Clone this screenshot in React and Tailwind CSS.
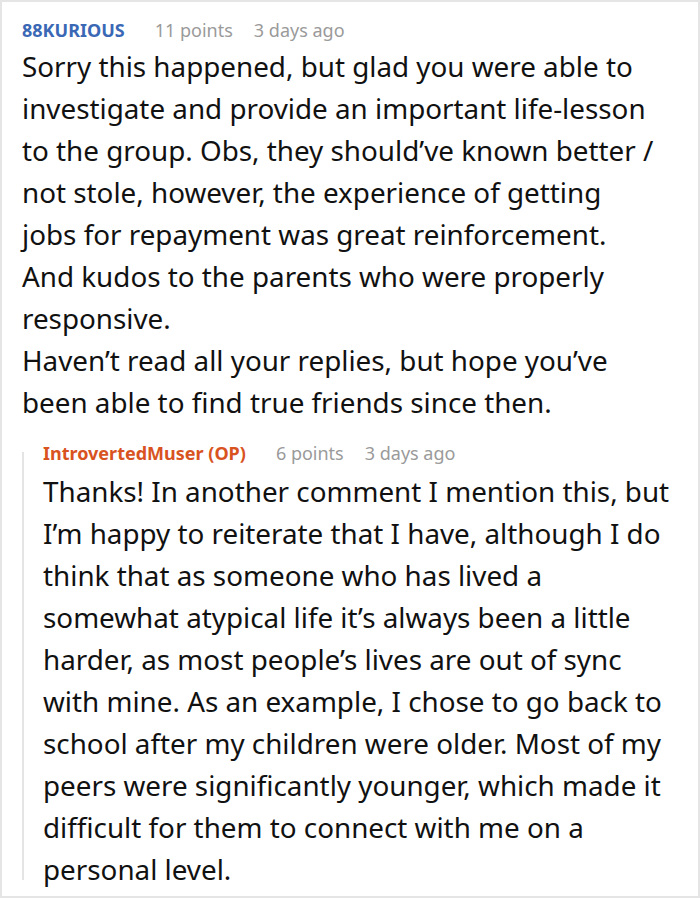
import React from 'react'

const comment = {
  author: '88KURIOUS',
  points: '11 points',
  time: '3 days ago',
  lines: [
    'Sorry this happened, but glad you were able to',
    'investigate and provide an important life-lesson',
    'to the group. Obs, they should’ve known better /',
    'not stole, however, the experience of getting',
    'jobs for repayment was great reinforcement.',
    'And kudos to the parents who were properly',
    'responsive.',
    'Haven’t read all your replies, but hope you’ve',
    'been able to find true friends since then.',
  ],
}

const reply = {
  author: 'IntrovertedMuser (OP)',
  points: '6 points',
  time: '3 days ago',
  lines: [
    'Thanks! In another comment I mention this, but',
    'I’m happy to reiterate that I have, although I do',
    'think that as someone who has lived a',
    'somewhat atypical life it’s always been a little',
    'harder, as most people’s lives are out of sync',
    'with mine. As an example, I chose to go back to',
    'school after my children were older. Most of my',
    'peers were significantly younger, which made it',
    'difficult for them to connect with me on a',
    'personal level.',
  ],
}

const Meta = ({ author, points, time, nameColor }) => (
  <div className="flex items-center text-[18px] leading-[24px] whitespace-nowrap">
    <span className={`font-bold ${nameColor} mr-[30px]`}>{author}</span>
    <span className="text-[#9a9a9a] mr-[21px]">{points}</span>
    <span className="text-[#9a9a9a]">{time}</span>
  </div>
)

const Body = ({ lines }) => (
  <div className="text-[27.8px] leading-[42px] text-[#111]">
    {lines.map((l, i) => (
      <div key={i} className="whitespace-nowrap">{l}</div>
    ))}
  </div>
)

const App = () => {
  return (
    <div
      className="w-[700px] h-[898px] bg-white border-2 border-[#e5e5e5] overflow-hidden"
      style={{ fontFamily: '"Noto Sans", sans-serif' }}
    >
      <div className="pl-[20px] pr-[28px] pt-[16px]">
        <Meta {...comment} nameColor="text-[#3a68b5]" />
        <div className="mt-[3px]">
          <Body lines={comment.lines} />
        </div>

        {/* Reply */}
        <div className="flex mt-[18px]">
          <div className="w-[2px] bg-[#e4e4e4] mt-[11px] mb-[10px] shrink-0" />
          <div className="pl-[19px]">
            <Meta {...reply} nameColor="text-[#d8531f]" />
            <div className="mt-[5px]">
              <Body lines={reply.lines} />
            </div>
          </div>
        </div>
      </div>
    </div>
  )
}

export default App
